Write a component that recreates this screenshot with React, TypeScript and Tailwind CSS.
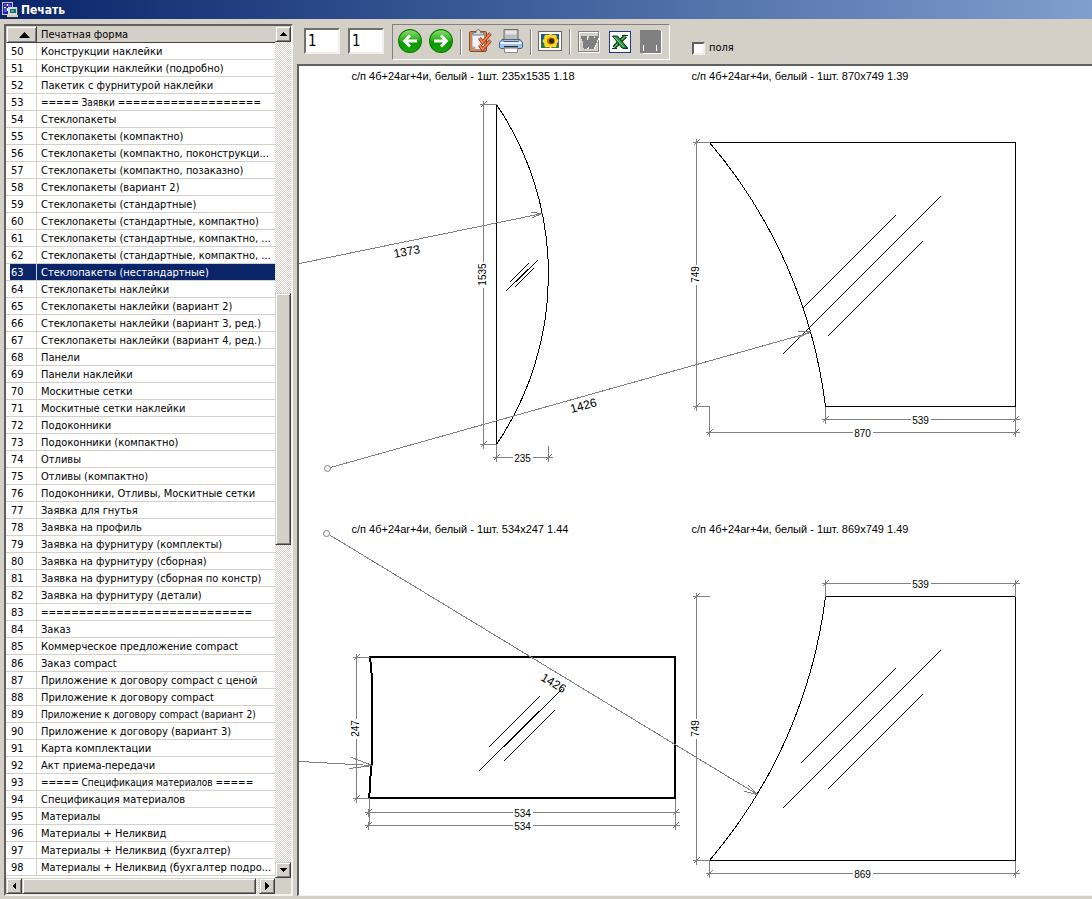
import type { ReactNode } from "react";

const FORMS: string[] = [
  "Конструкции наклейки",
  "Конструкции наклейки (подробно)",
  "Пакетик с фурнитурой наклейки",
  "===== Заявки ===================",
  "Стеклопакеты",
  "Стеклопакеты (компактно)",
  "Стеклопакеты (компактно, поконструкци...",
  "Стеклопакеты (компактно, позаказно)",
  "Стеклопакеты (вариант 2)",
  "Стеклопакеты (стандартные)",
  "Стеклопакеты (стандартные, компактно)",
  "Стеклопакеты (стандартные, компактно, ...",
  "Стеклопакеты (стандартные, компактно, ...",
  "Стеклопакеты (нестандартные)",
  "Стеклопакеты наклейки",
  "Стеклопакеты наклейки (вариант 2)",
  "Стеклопакеты наклейки (вариант 3, ред.)",
  "Стеклопакеты наклейки (вариант 4, ред.)",
  "Панели",
  "Панели наклейки",
  "Москитные сетки",
  "Москитные сетки наклейки",
  "Подоконники",
  "Подоконники (компактно)",
  "Отливы",
  "Отливы (компактно)",
  "Подоконники, Отливы, Москитные сетки",
  "Заявка для гнутья",
  "Заявка на профиль",
  "Заявка на фурнитуру (комплекты)",
  "Заявка на фурнитуру (сборная)",
  "Заявка на фурнитуру (сборная по констр)",
  "Заявка на фурнитуру (детали)",
  "============================",
  "Заказ",
  "Коммерческое предложение compact",
  "Заказ compact",
  "Приложение к договору compact с ценой",
  "Приложение к договору compact",
  "Приложение к договору compact (вариант 2)",
  "Приложение к договору (вариант 3)",
  "Карта комплектации",
  "Акт приема-передачи",
  "===== Спецификация материалов =====",
  "Спецификация материалов",
  "Материалы",
  "Материалы + Неликвид",
  "Материалы + Неликвид (бухгалтер)",
  "Материалы + Неликвид (бухгалтер подро...",
];
const FIRST_NUMBER = 50;
const SELECTED = 63;

/* Divider rows and the widest full name use the smaller size so that they fit the column. */
const isWide = (name: string) => name.startsWith("=") || (name.length > 40 && !name.endsWith("..."));

const RAISED =
  "border border-t-[#d4d0c8] border-l-[#d4d0c8] border-r-[#404040] border-b-[#404040] bg-[#d4d0c8] shadow-[inset_1px_1px_0_#ffffff,inset_-1px_-1px_0_#808080]";
const TRACK = "bg-[repeating-conic-gradient(#ffffff_0_25%,#d4d0c8_0_50%)] bg-[length:2px_2px]";

function ScrollButton({ label, points }: { label: string; points: string }) {
  return (
    <button aria-label={label} className={`flex size-4 shrink-0 items-center justify-center ${RAISED}`}>
      <svg width="8" height="8" viewBox="0 0 8 8" shapeRendering="crispEdges">
        <polygon points={points} fill="#000" />
      </svg>
    </button>
  );
}

function FormList() {
  return (
    <section className="flex w-[289px] shrink-0 flex-col border-2 border-t-[#606060] border-l-[#606060] border-r-[#f4f3f0] border-b-[#f4f3f0] bg-[#d4d0c8]">
      <div className="flex grow">
        <div className="min-w-0 grow bg-white">
          <table className="w-full table-fixed border-separate border-spacing-0 text-left">
            <thead>
              <tr>
                <th className={`h-[17px] w-[31px] p-0 ${RAISED}`} aria-label="Номер">
                  <svg className="ml-3" width="11" height="6" viewBox="0 0 11 6">
                    <polygon points="0,6 5.5,0 11,6" fill="#000" />
                  </svg>
                </th>
                <th className="h-[17px] border-b border-[#404040] bg-[#d4d0c8] p-0 pt-[2px] pl-1 font-normal leading-[14px]">
                  Печатная форма
                </th>
              </tr>
            </thead>
            <tbody>
              {FORMS.map((name, i) => {
                const number = FIRST_NUMBER + i;
                const selected = number === SELECTED;
                return (
                  <tr key={number} className={selected ? "text-white" : ""}>
                    <td className="h-[17px] border-r border-b border-[#d4d0c8] p-0 pl-1">
                      <div className={`pt-[2px] pl-px leading-[14px] ${selected ? "bg-[#0a246a]" : ""}`}>{number}</div>
                    </td>
                    <td
                      className={`h-[17px] overflow-hidden border-b border-[#d4d0c8] p-0 pt-[2px] pl-1 leading-[14px] whitespace-nowrap ${
                        selected ? "bg-[#0a246a]" : ""
                      } ${isWide(name) ? "text-[10px]" : ""}`}
                    >
                      {name}
                    </td>
                  </tr>
                );
              })}
            </tbody>
          </table>
        </div>
        <div className={`flex w-4 shrink-0 flex-col ${TRACK}`}>
          <ScrollButton label="Вверх" points="0,6 4,2 8,6" />
          <div className="grow-[251]" />
          <div className={`h-[252px] ${RAISED}`} />
          <div className="grow-[317]" />
          <ScrollButton label="Вниз" points="0,2 8,2 4,6" />
        </div>
      </div>
      <div className="flex h-4 pr-4">
        <div className={`flex grow ${TRACK}`}>
          <ScrollButton label="Влево" points="6,0 6,8 2,4" />
          <div className={`w-[234px] ${RAISED}`} />
          <div className="grow" />
          <ScrollButton label="Вправо" points="2,0 6,4 2,8" />
        </div>
      </div>
    </section>
  );
}

function AppIcon() {
  return (
    <svg width="16" height="16" viewBox="0 0 16 16" shapeRendering="crispEdges">
      <rect x="0" y="0" width="11" height="13" fill="#c8c8c8" />
      <rect x="1" y="1" width="9" height="11" fill="#2020a0" />
      <path d="M2 2h3v2h-3zM6 2h3v4h-3zM2 6h3v4h-3z" fill="#5050f0" />
      <path d="M5 2h1v2h-1zM2 5h2v1h-2zM5 6h1v3h-1z" fill="#fff" />
      <rect x="6" y="5" width="9" height="8" fill="#d8d8d0" />
      <rect x="8" y="7" width="6" height="4" fill="#107070" />
      <rect x="9" y="8" width="3" height="2" fill="#30b0a0" />
      <rect x="5" y="13" width="11" height="2" fill="#d4d0c8" />
      <rect x="5" y="15" width="11" height="1" fill="#303030" />
      <rect x="15" y="5" width="1" height="8" fill="#404040" />
    </svg>
  );
}

function ArrowIcon({ back }: { back?: boolean }) {
  const id = back ? "green-back" : "green-next";
  return (
    <svg width="24" height="24" viewBox="0 0 24 24">
      <defs>
        <linearGradient id={id} x1="0" y1="0" x2="0" y2="1">
          <stop offset="0" stopColor="#8fe070" />
          <stop offset="0.45" stopColor="#2fb01c" />
          <stop offset="0.55" stopColor="#0c9800" />
          <stop offset="1" stopColor="#18a808" />
        </linearGradient>
      </defs>
      <circle cx="12" cy="12" r="11.4" fill={`url(#${id})`} stroke="#087a04" strokeWidth="1.1" />
      <path
        d={back ? "M19 12H6.5M12 6.5L6.5 12L12 17.5" : "M5 12H17.5M12 6.5L17.5 12L12 17.5"}
        fill="none"
        stroke="#fff"
        strokeWidth="2.8"
      />
    </svg>
  );
}

function ClipboardIcon() {
  return (
    <svg width="24" height="24" viewBox="0 0 24 24">
      <rect x="1.5" y="2.5" width="17" height="20" rx="1.5" fill="#c98b5e" stroke="#8a4a24" />
      <path d="M4 5h12.5v15.5H7L4 17.5z" fill="#f2f2f5" stroke="#9a8a80" strokeWidth="0.8" />
      <path d="M4 17.5h3.5V20.5z" fill="#b0b0b8" />
      <path d="M5 6V3.5h3C8 1.5 9 .6 10.2 .6S12.5 1.5 12.5 3.5h3V6z" fill="#d4d8dc" stroke="#707880" />
      <path d="M11.5 9l3 4.5L22.5 4.5M11.5 16l3 4.5L22.5 11.5" fill="none" stroke="#98340c" strokeWidth="3.4" />
      <path d="M11.5 9l3 4.5L22.5 4.5M11.5 16l3 4.5L22.5 11.5" fill="none" stroke="#f08050" strokeWidth="1.9" />
    </svg>
  );
}

function PrinterIcon() {
  return (
    <svg width="24" height="24" viewBox="0 0 24 24">
      <path d="M5 .5h14v12h-14z" fill="#bcbcbc" stroke="#6c6c6c" />
      <path d="M6.5 1.5h11v4h-11z" fill="#e6e6e6" />
      <path d="M3 10.5h18l2.5 3v5l-1.5 1H2l-1.5-1v-5z" fill="#9dc4ee" stroke="#4a6488" />
      <path d="M4.5 9v3h15V9l1 2-1.5 2h-14l-1.5-2z" fill="#50545c" />
      <path d="M1.5 14h21" stroke="#e6f2ff" strokeWidth="2" />
      <path d="M5 17h14v1.5H5z" fill="#24303c" />
      <path d="M5.5 18.5h13v5h-13z" fill="#fff" stroke="#888" />
      <path d="M6 19.5h12" stroke="#b8b8b8" />
    </svg>
  );
}

function PictureIcon() {
  return (
    <svg width="24" height="24" viewBox="0 0 24 24">
      <rect x="0.5" y="2.5" width="23" height="19" fill="#fff" stroke="#686868" />
      <rect x="3" y="5" width="18" height="14" fill="#1c5c90" />
      <path d="M3 14l4 2 3 3H3zM18 15h3v4h-5z" fill="#2c7440" />
      <g fill="#ffd820">
        <ellipse cx="12.5" cy="12" rx="8" ry="4" />
        <ellipse cx="12.5" cy="12" rx="8" ry="4" transform="rotate(45 12.5 12)" />
        <ellipse cx="12.5" cy="12" rx="7" ry="4" transform="rotate(90 12.5 12)" />
        <ellipse cx="12.5" cy="12" rx="8" ry="4" transform="rotate(135 12.5 12)" />
      </g>
      <ellipse cx="13" cy="12" rx="4" ry="3.5" fill="#b07808" />
      <ellipse cx="13.5" cy="12" rx="2.5" ry="2.5" fill="#3c2004" />
    </svg>
  );
}

function WordIcon() {
  return (
    <svg width="22" height="24" viewBox="0 0 22 24" shapeRendering="crispEdges">
      <rect x="1.5" y="2.5" width="20" height="20" fill="none" stroke="#fff" />
      <rect x="0.5" y="1.5" width="20" height="20" fill="none" stroke="#808080" />
      <g fill="#fff" transform="translate(1 1)">
        <path d="M3 6h5l1 1-.5 6L11 8V6h5l-.5 7L17 8V6h3v2l-4.5 10h-4l-.5-3-2 3H6L4.5 8H3z" />
      </g>
      <path d="M3 6h5l1 1-.5 6L11 8V6h5l-.5 7L17 8V6h3v2l-4.5 10h-4l-.5-3-2 3H6L4.5 8H3z" fill="#808080" stroke="#808080" />
    </svg>
  );
}

function ExcelIcon() {
  return (
    <svg width="22" height="24" viewBox="0 0 22 24">
      <rect x="0.5" y="1.5" width="21" height="21" fill="#fff" stroke="#1c3c88" />
      <path d="M16.5 6L5 17.5" stroke="#103818" strokeWidth="4" />
      <path d="M16.5 6L5 17.5" stroke="#68c078" strokeWidth="1.5" />
      <path d="M3.5 6H8.5L18.5 18H13z" fill="#2c9440" stroke="#0c3014" />
      <path d="M5.5 7l9.5 10.5" stroke="#80d090" />
      <path d="M13 5.5h6M14 18.5h5M3 18.5h5" stroke="#103818" />
    </svg>
  );
}

function DisabledIcon() {
  return (
    <svg width="22" height="24" viewBox="0 0 22 24" shapeRendering="crispEdges">
      <path d="M1 1h21v23H3z" fill="#fff" />
      <path d="M0 0h20l1 2v21H0z" fill="#808080" />
      <path d="M3 15v6M16 15v6" stroke="#fff" />
    </svg>
  );
}

function ToolButton({ label, children }: { label: string; children: ReactNode }) {
  return (
    <button aria-label={label} className="flex h-6 shrink-0 items-center">
      {children}
    </button>
  );
}

function Separator() {
  return <div className="-mr-px h-[26px] w-[2px] shrink-0 border-l border-[#808080] bg-white" />;
}

function Toolbar() {
  const sunken =
    "h-[26px] w-9 border-2 border-t-[#707070] border-l-[#707070] border-r-[#f0efec] border-b-[#f0efec] bg-white pl-[2px] text-[15px] leading-5 outline-none";
  return (
    <div className="flex h-[40px] items-start pl-[7px]">
      <input aria-label="Страница с" defaultValue="1" className={`mt-1 mr-2 ${sunken}`} />
      <input aria-label="Страница по" defaultValue="1" className={`mt-1 mr-2 ${sunken}`} />
      <div className="flex h-9 items-center border border-t-[#808080] border-l-[#808080] border-r-white border-b-white px-[5px]">
        <div className="flex gap-[7px]">
          <ToolButton label="Назад"><ArrowIcon back /></ToolButton>
          <ToolButton label="Вперёд"><ArrowIcon /></ToolButton>
          <Separator />
          <ToolButton label="Настройка"><ClipboardIcon /></ToolButton>
          <ToolButton label="Печать"><PrinterIcon /></ToolButton>
          <Separator />
          <ToolButton label="Рисунок"><PictureIcon /></ToolButton>
          <Separator />
        </div>
        <div className="ml-2 flex gap-[9px] pr-[2px]">
          <ToolButton label="Word"><WordIcon /></ToolButton>
          <ToolButton label="Excel"><ExcelIcon /></ToolButton>
          <ToolButton label="Экспорт"><DisabledIcon /></ToolButton>
        </div>
      </div>
      <label className="mt-[17px] ml-[22px] flex items-center gap-1 leading-[14px]">
        <input
          type="checkbox"
          className="size-[13px] appearance-none border-2 border-t-[#606060] border-l-[#606060] border-r-[#f0efec] border-b-[#f0efec] bg-white"
        />
        поля
      </label>
    </div>
  );
}

/* Dimension line from a to b at a fixed offset, with ticks and a centred value. */
function Dimension({ a, b, at, value, vertical }: { a: number; b: number; at: number; value: string; vertical?: boolean }) {
  const mid = Math.round((a + b) / 2);
  const half = value.length * 3 + 1;
  const p = (along: number, across: number) => (vertical ? `${across} ${along}` : `${along} ${across}`);
  const tick = (c: number) => {
    const slash = vertical
      ? `M${at - 3} ${c + 3}L${at + 3} ${c - 3}`
      : `M${c - 3} ${at + 3}L${c + 3} ${at - 3}`;
    return `M${p(c, at - 4)}L${p(c, at + 4)}${slash}`;
  };
  return (
    <g>
      <path
        d={`M${p(a - 4, at)}L${p(mid - half, at)}M${p(mid + half, at)}L${p(b + 4, at)}${tick(a)}${tick(b)}`}
        stroke="#808080"
        fill="none"
      />
      <text
        x={vertical ? 0 : mid}
        y={vertical ? 0 : at + 4}
        transform={vertical ? `translate(${at + 2.5} ${mid}) rotate(-90)` : undefined}
        textAnchor="middle"
        className="text-[10px]"
      >
        {value}
      </text>
    </g>
  );
}

function Caption({ x, y, children }: { x: number; y: number; children: string }) {
  return <text x={x} y={y} className="text-[11px]">{children}</text>;
}

function Preview() {
  return (
    <svg
      width="793"
      height="828"
      viewBox="298.5 65.5 793 828"
      shapeRendering="crispEdges"
      className="block shrink-0 font-['Liberation_Sans',Arial,sans-serif]"
      role="img"
      aria-label="Предварительный просмотр"
    >
      <Caption x={351} y={79.5}>с/п 4б+24ar+4и, белый - 1шт. 235x1535 1.18</Caption>
      <Caption x={691} y={79.5}>с/п 4б+24ar+4и, белый - 1шт. 870x749 1.39</Caption>
      <Caption x={351} y={532.5}>с/п 4б+24ar+4и, белый - 1шт. 534x247 1.44</Caption>
      <Caption x={691} y={532.5}>с/п 4б+24ar+4и, белый - 1шт. 869x749 1.49</Caption>

      <g fill="none" stroke="#000">
        <path d="M496 104A304 304 0 0 1 496 444Z" />
        <path d="M709 142H1015V406H825A502 502 0 0 0 709 142Z" />
        <path d="M825 596H1015V860H709A502 502 0 0 0 825 596Z" />
      </g>
      <g fill="none" stroke="#000" transform="translate(-1 0)">
        <path d="M529 263L510 282M538 260L506 291M534 268L515 287" />
        <path d="M896 215L803 308M941 196L783 354M923 241L828 336" />
        <path d="M896 668L801 763M941 650L783 808M923 694L828 789" />
        <path d="M540 696L489 747M562 689L479 771M555 710L504 761" />
      </g>
      <path
        d="M369.5 656.5H674.5V797.5H368.5L369.5 788L370.5 764H371.5V677L370.5 667Z"
        fill="none"
        stroke="#000"
        strokeWidth="2"
      />

      <g fill="none" stroke="#808080">
        <path d="M299 263L542 213M531 212L542 213L532 217" />
        <path d="M330 467L810 332M797 331H810L798 337" />
        <path d="M330 535L757 794M744 791L757 794L748 785" />
        <path d="M299 761L372 765M351 757L372 765L349 768" />
        <path d="M483 104H496M483 444H496M496 444V458M548 445V458" />
        <path d="M696 142H709M696 406H709M709 406V432M825 406V419M1015 406V432" />
        <path d="M696 596H709M696 860H709V873M1015 860V873M825 596V583M1015 596V583" />
        <path d="M356 657H369M356 798H369V825M675 798V825" />
      </g>
      <g fill="#fff" stroke="#808080" shapeRendering="auto">
        <circle cx="327" cy="468" r="3" />
        <circle cx="326" cy="533" r="3" />
      </g>

      <Dimension vertical a={104} b={444} at={483} value="1535" />
      <Dimension a={496} b={548} at={457} value="235" />
      <Dimension vertical a={142} b={406} at={696} value="749" />
      <Dimension a={825} b={1015} at={419} value="539" />
      <Dimension a={709} b={1015} at={432} value="870" />
      <Dimension vertical a={657} b={798} at={356} value="247" />
      <Dimension a={368} b={675} at={812} value="534" />
      <Dimension a={368} b={675} at={825} value="534" />
      <Dimension a={825} b={1015} at={583} value="539" />
      <Dimension vertical a={596} b={860} at={696} value="749" />
      <Dimension a={709} b={1015} at={873} value="869" />

      <g textAnchor="middle" className="text-[12px]">
        <text transform="translate(407 255) rotate(-11)">1373</text>
        <text transform="translate(584 409) rotate(-15)">1426</text>
        <text transform="translate(551 686) rotate(31)">1426</text>
      </g>
    </svg>
  );
}

export default function App() {
  return (
    <div className="flex min-h-screen flex-col overflow-hidden bg-[#d4d0c8] font-['DejaVu_Sans_Condensed','DejaVu_Sans',Tahoma,sans-serif] text-[11px] text-black">
      <header className="flex h-[19px] items-center gap-[3px] bg-linear-to-r from-[#0a246a] to-[#7f9fcf] pl-[2px] text-white">
        <AppIcon />
        <h1 className="text-[12px] leading-4 font-bold">Печать</h1>
      </header>
      <main className="flex grow gap-1 pt-[5px] pb-[3px] pl-1">
        <FormList />
        <div className="flex min-w-0 grow flex-col">
          <Toolbar />
          <section className="flex grow overflow-hidden border-t-2 border-l-2 border-b border-t-[#606060] border-l-[#606060] border-b-[#f4f3f0] bg-white">
            <Preview />
          </section>
        </div>
      </main>
    </div>
  );
}
